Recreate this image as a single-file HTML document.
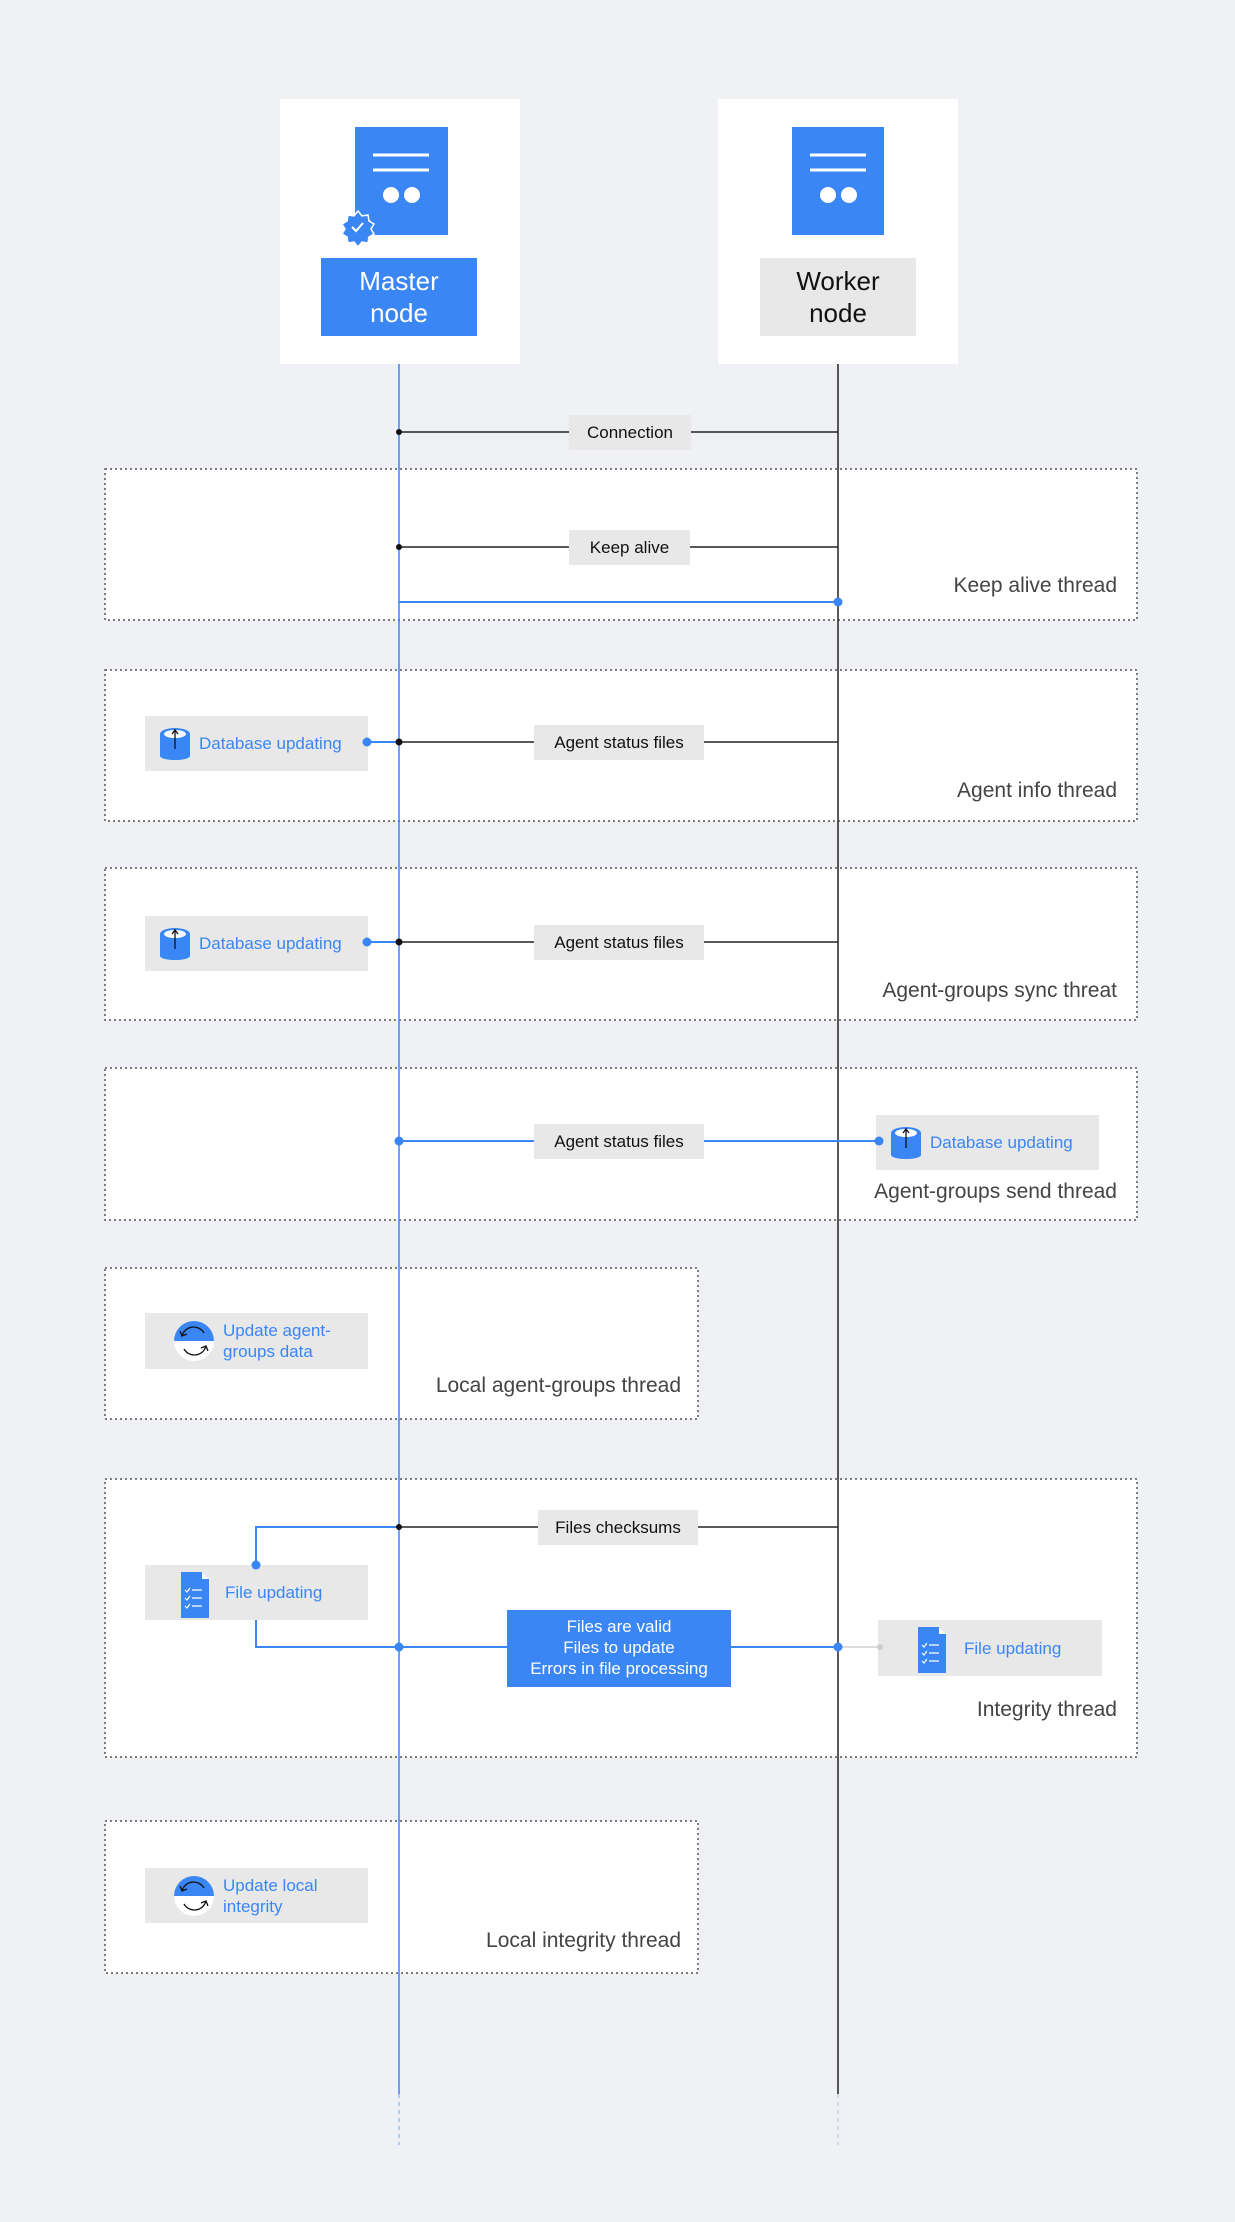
<!DOCTYPE html>
<html><head><meta charset="utf-8"><style>
body{margin:0;width:1235px;height:2222px;background:#f0f1f4;position:relative;overflow:hidden;font-family:"Liberation Sans",sans-serif}
.a{position:absolute;box-sizing:border-box}
.lbl{position:absolute;background:#e8e8e8;color:#111;font-size:17px;display:flex;align-items:center;justify-content:center;box-sizing:border-box}
.tt{position:absolute;color:#444;font-size:21px;text-align:right;white-space:nowrap}
.bx{position:absolute;background:#e8e8e8;color:#3a86f5;font-size:17px;display:flex;align-items:center;box-sizing:border-box;line-height:21px}
svg{position:absolute;left:0;top:0}
</style></head><body>
<svg width="1235" height="2222">
<g fill="#fff" stroke="#555" stroke-width="1.5" stroke-dasharray="2 3">
<rect x="105" y="469" width="1032" height="151"/>
<rect x="105" y="670" width="1032" height="151"/>
<rect x="105" y="868" width="1032" height="152"/>
<rect x="105" y="1068" width="1032" height="152"/>
<rect x="105" y="1268" width="593" height="151"/>
<rect x="105" y="1479" width="1032" height="278"/>
<rect x="105" y="1821" width="593" height="152"/>
</g>
</svg>

<div class="a" style="left:280px;top:99px;width:240px;height:265px;background:#fff"></div>
<div class="a" style="left:718px;top:99px;width:240px;height:265px;background:#fff"></div>

<div class="bx" style="left:145px;top:716px;width:223px;height:55px;padding-left:54px">Database updating</div>
<div class="bx" style="left:145px;top:916px;width:223px;height:55px;padding-left:54px">Database updating</div>
<div class="bx" style="left:876px;top:1115px;width:223px;height:55px;padding-left:54px">Database updating</div>
<div class="bx" style="left:145px;top:1565px;width:223px;height:55px;padding-left:80px">File updating</div>
<div class="bx" style="left:878px;top:1620px;width:224px;height:56px;padding-left:86px">File updating</div>
<div class="bx" style="left:145px;top:1313px;width:223px;height:56px;padding-left:78px">Update agent-<br>groups data</div>
<div class="bx" style="left:145px;top:1868px;width:223px;height:55px;padding-left:78px">Update local<br>integrity</div>

<svg width="1235" height="2222">
<g fill="#3a86f5">
<rect x="355" y="127" width="93" height="108"/>
<rect x="792" y="127" width="92" height="108"/>
</g>
<g stroke="#fff" stroke-width="3">
<line x1="373" y1="155" x2="429" y2="155"/><line x1="373" y1="170" x2="429" y2="170"/>
<line x1="810" y1="155" x2="866" y2="155"/><line x1="810" y1="170" x2="866" y2="170"/>
</g>
<g fill="#fff"><circle cx="391" cy="195" r="8"/><circle cx="412" cy="195" r="8"/><circle cx="828" cy="195" r="8"/><circle cx="849" cy="195" r="8"/></g>
<path d="M358 211 l4 5 6-1 1 6 5 3-3 5 3 5-5 3-1 6-6-1-4 5-4-5-6 1-1-6-5-3 3-5-3-5 5-3 1-6 6 1z" fill="#3a86f5" stroke="#fff" stroke-width="1.5"/>
<path d="M352 227 l4 4 7-8" stroke="#fff" stroke-width="2" fill="none"/>

<line x1="399" y1="364" x2="399" y2="2094" stroke="#3a86f5" stroke-width="1.5"/>
<line x1="399" y1="2094" x2="399" y2="2145" stroke="#9cc1f7" stroke-width="1.5" stroke-dasharray="4 4"/>
<line x1="838" y1="364" x2="838" y2="2094" stroke="#222" stroke-width="1.5"/>
<line x1="838" y1="2094" x2="838" y2="2145" stroke="#ccd" stroke-width="1.5" stroke-dasharray="4 4"/>

<g stroke="#222" stroke-width="1.5">
<line x1="399" y1="432" x2="838" y2="432"/>
<line x1="399" y1="547" x2="838" y2="547"/>
<line x1="399" y1="742" x2="838" y2="742"/>
<line x1="399" y1="942" x2="838" y2="942"/>
<line x1="399" y1="1527" x2="838" y2="1527"/>
</g>
<g stroke="#3a86f5" stroke-width="2" fill="none">
<line x1="399" y1="602" x2="838" y2="602"/>
<line x1="367" y1="742" x2="396" y2="742"/>
<line x1="367" y1="942" x2="396" y2="942"/>
<line x1="399" y1="1141" x2="879" y2="1141"/>
<path d="M399 1527 H256 V1565"/>
<path d="M256 1620 V1647 H838"/>
</g>
<g fill="#111"><circle cx="399" cy="432" r="3"/><circle cx="399" cy="547" r="3"/><circle cx="399" cy="742" r="3.5"/><circle cx="399" cy="942" r="3.5"/><circle cx="399" cy="1527" r="3"/></g>
<line x1="838" y1="1647" x2="880" y2="1647" stroke="#ddd" stroke-width="2"/>
<g fill="#3a86f5"><circle cx="838" cy="602" r="4.5"/><circle cx="367" cy="742" r="4.5"/><circle cx="367" cy="942" r="4.5"/><circle cx="399" cy="1141" r="4.5"/><circle cx="879" cy="1141" r="4.5"/><circle cx="256" cy="1565" r="4.5"/><circle cx="399" cy="1647" r="4.5"/><circle cx="838" cy="1647" r="4.5"/></g>
<circle cx="880" cy="1647" r="3" fill="#ccc"/>

<g id="db">
<rect x="160" y="734" width="30" height="22" fill="#3a86f5"/><ellipse cx="175" cy="756" rx="15" ry="4" fill="#3a86f5"/><ellipse cx="175" cy="734" rx="15" ry="6" fill="#3a86f5"/><ellipse cx="175" cy="734" rx="11" ry="4" fill="#fff"/>
<path d="M175 749 V731 M172 734 L175 730 L178 734" stroke="#111" stroke-width="1.3" fill="none"/>
</g>
<use href="#db" x="0" y="200"/>
<use href="#db" x="731" y="399"/>
<g id="fi"><path d="M181 1572 h21 l7 7 v39 h-28z" fill="#3a86f5"/><path d="M202 1572 v7 h7z" fill="#fff"/>
<g stroke="#fff" stroke-width="1.2" fill="none"><path d="M185 1590 l2 2 3-4 M185 1598 l2 2 3-4 M185 1606 l2 2 3-4"/><path d="M192 1590 h10 M192 1598 h10 M192 1606 h10"/></g></g>
<use href="#fi" x="737" y="55"/>
<g id="up"><circle cx="194" cy="1341" r="20" fill="#fff"/><path d="M174 1341 a20 20 0 0 1 40 0z" fill="#3a86f5"/>
<path d="M182 1336 a12 12 0 0 1 22 -3 M206 1346 a12 12 0 0 1 -22 3" stroke="#111" stroke-width="1.3" fill="none"/>
<path d="M180 1331 l2 5 5-2 M208 1351 l-2 -5 -5 2" stroke="#111" stroke-width="1.3" fill="none"/></g>
<use href="#up" x="0" y="555"/>
</svg>

<div class="a" style="left:321px;top:258px;width:156px;height:78px;background:#3a86f5;color:#fff;font-size:26px;text-align:center;line-height:32px;padding-top:7px">Master<br>node</div>
<div class="a" style="left:760px;top:258px;width:156px;height:78px;background:#e8e8e8;color:#111;font-size:26px;text-align:center;line-height:32px;padding-top:7px">Worker<br>node</div>

<div class="lbl" style="left:569px;top:415px;width:122px;height:35px">Connection</div>
<div class="lbl" style="left:569px;top:530px;width:121px;height:35px">Keep alive</div>
<div class="lbl" style="left:534px;top:725px;width:170px;height:35px">Agent status files</div>
<div class="lbl" style="left:534px;top:925px;width:170px;height:35px">Agent status files</div>
<div class="lbl" style="left:534px;top:1124px;width:170px;height:35px">Agent status files</div>
<div class="lbl" style="left:538px;top:1510px;width:160px;height:35px">Files checksums</div>
<div class="a" style="left:507px;top:1610px;width:224px;height:77px;background:#3a86f5;color:#fff;font-size:17px;text-align:center;line-height:21px;padding-top:6px">Files are valid<br>Files to update<br>Errors in file processing</div>

<div class="tt" style="right:118px;top:574px">Keep alive thread</div>
<div class="tt" style="right:118px;top:779px">Agent info thread</div>
<div class="tt" style="right:118px;top:979px">Agent-groups sync threat</div>
<div class="tt" style="right:118px;top:1180px">Agent-groups send thread</div>
<div class="tt" style="right:554px;top:1374px">Local agent-groups thread</div>
<div class="tt" style="right:118px;top:1698px">Integrity thread</div>
<div class="tt" style="right:554px;top:1929px">Local integrity thread</div>
</body></html>
